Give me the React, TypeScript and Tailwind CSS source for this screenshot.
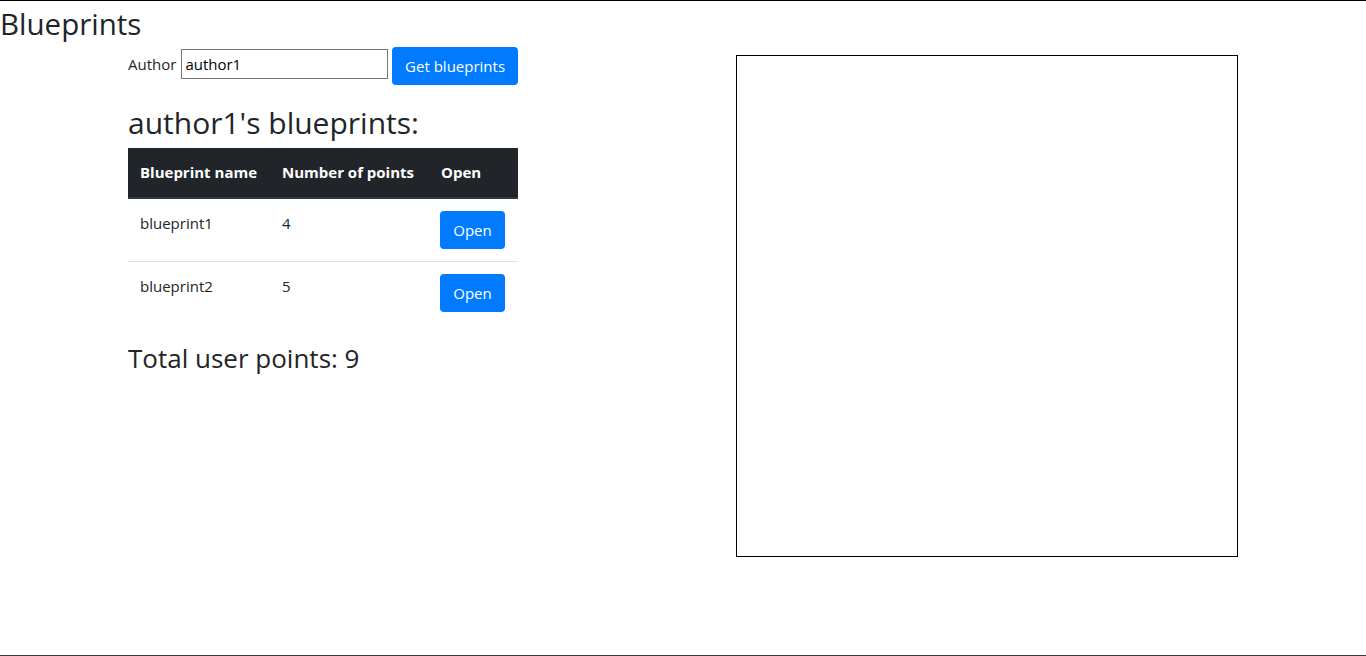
const rows = [
  { name: "blueprint1", points: 4 },
  { name: "blueprint2", points: 5 },
];

const font = { fontFamily: '"Open Sans", "Noto Sans", sans-serif' };

export default function App() {
  return (
    <div
      className="h-[656px] flex flex-col border-t border-black border-b border-b-[#3a3a3a] bg-white text-[#212529]"
      style={font}
    >
      <h1 className="text-[29.5px] leading-[38px] h-[38px] mt-[4px]">Blueprints</h1>
      <div className="flex items-start mt-[4px]">
        <div className="ml-[128px] w-[390px] flex flex-col">
          <div className="flex items-start h-[38px]">
            <label className="text-[15px] leading-[24px] mt-[5px] mr-[5px]">Author</label>
            <input
              defaultValue="author1"
              className="mt-[2px] w-[207px] h-[30px] border border-[#767676] px-[3px] text-[15px] text-black outline-none"
            />
            <button className="ml-[4px] h-[38px] w-[126px] rounded-[4px] bg-[#007bff] text-white text-[15px]">
              Get blueprints
            </button>
          </div>
          <h3 className="text-[30px] leading-[36px] mt-[20px] mb-[7px]">author1's blueprints:</h3>
          <div className="flex flex-col">
            <div className="grid grid-cols-[142px_159px_89px] bg-[#212529] text-white font-bold text-[15px] h-[51px] border-b-2 border-[#32383e]">
              <div className="px-[12px] flex items-center">Blueprint name</div>
              <div className="px-[12px] flex items-center">Number of points</div>
              <div className="px-[12px] flex items-center">Open</div>
            </div>
            {rows.map((r, i) => (
              <div
                key={r.name}
                className={`grid grid-cols-[142px_159px_89px] text-[15px] ${i > 0 ? "border-t border-[#dee2e6]" : ""}`}
              >
                <div className="px-[12px] pt-[12px] leading-[24px]">{r.name}</div>
                <div className="px-[12px] pt-[12px] leading-[24px]">{r.points}</div>
                <div className="px-[11px] py-[12px]">
                  <button className="h-[38px] w-[65px] rounded-[4px] bg-[#007bff] text-white text-[15px]">
                    Open
                  </button>
                </div>
              </div>
            ))}
          </div>
          <h3 className="text-[26px] leading-[34px] mt-[17px]">Total user points: 9</h3>
        </div>
        <div className="ml-[218px] mt-[8px] w-[502px] h-[502px] border border-black" />
      </div>
    </div>
  );
}
